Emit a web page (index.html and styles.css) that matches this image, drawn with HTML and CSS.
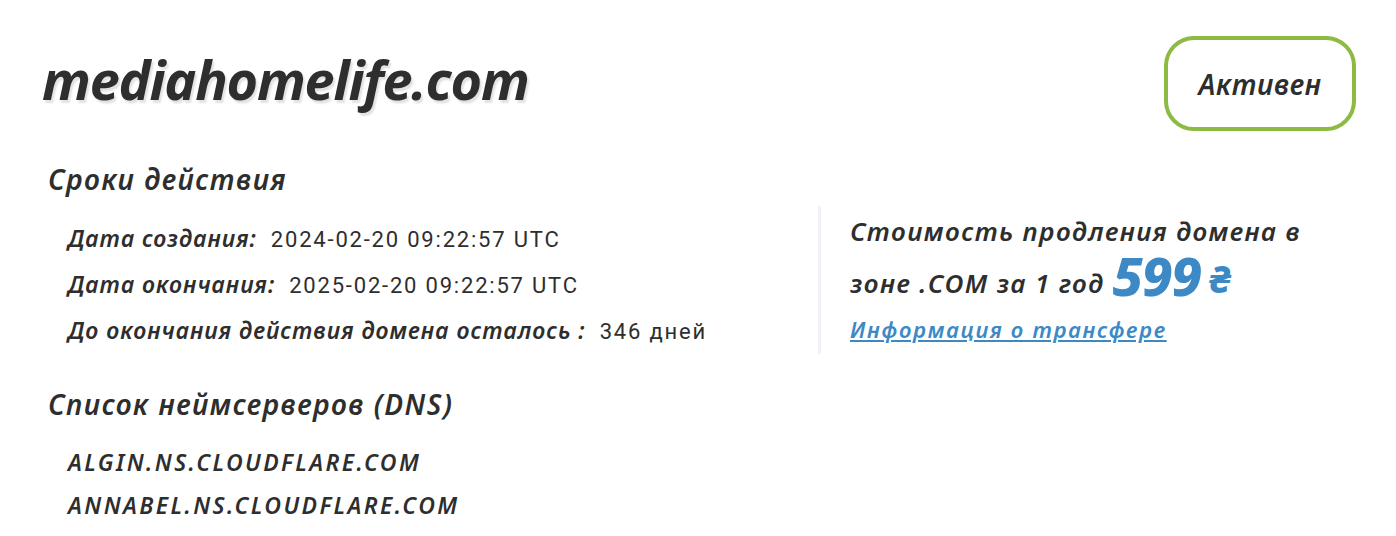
FILE: index.html
```html
<!DOCTYPE html>
<html lang="ru">
<head>
  <meta charset="UTF-8" />
  <title>mediahomelife.com</title>
  <link rel="stylesheet" href="styles.css">
</head>
<body>

  <!-- DOMAIN CARD -->
  <div class="domain-card">
    <div class="card-head">
      <h1 class="domain-name">mediahomelife.com</h1>
      <div class="status-badge">Активен</div>
    </div>

    <div class="card-body">
      <div class="info-col">
        <h2 class="section-title">Сроки действия</h2>
        <div class="info-row"><span class="label">Дата создания:</span> <span class="value">2024-02-20 09:22:57 UTC</span></div>
        <div class="info-row"><span class="label">Дата окончания:</span> <span class="value">2025-02-20 09:22:57 UTC</span></div>
        <div class="info-row"><span class="label">До окончания действия домена осталось :</span> <span class="value">346 дней</span></div>

        <h2 class="section-title dns-title">Список неймсерверов (DNS)</h2>
        <div class="ns-row">ALGIN.NS.CLOUDFLARE.COM</div>
        <div class="ns-row">ANNABEL.NS.CLOUDFLARE.COM</div>
      </div>

      <div class="price-col">
        <p class="price-text">Стоимость продления домена в зоне .COM за 1 год <span class="price">599</span> <span class="currency">₴</span></p>
        <a class="transfer-link" href="#">Информация о трансфере</a>
      </div>
    </div>
  </div>

</body>
</html>
```

FILE: styles.css
```css
body {
  margin: 0;
  background-color: #fff;
  color: #2e2e2e;
  font-family: "Noto Sans", "Open Sans", sans-serif;
}
.domain-card {
  padding: 34px 40px 0 42px;
}
.card-head {
  display: flex;
  justify-content: space-between;
  align-items: flex-start;
}
.domain-name {
  margin: 13px 0 0;
  font-size: 54px;
  font-style: italic;
  font-weight: 700;
  line-height: 64px;
  letter-spacing: -1.2px;
  text-shadow: 2px 3px 2px #e2e2e2;
}
.status-badge {
  margin-top: 2px;
  width: 184px;
  height: 87px;
  border: 4px solid #8cba42;
  border-radius: 30px;
  display: flex;
  align-items: center;
  justify-content: center;
  font-size: 28px;
  font-style: italic;
  font-weight: 600;
  letter-spacing: 0.6px;
}
.card-body {
  display: grid;
  grid-template-columns: 776px 1fr;
}
.section-title {
  margin: 0;
  padding-left: 6px;
  font-size: 28px;
  font-style: italic;
  font-weight: 600;
  line-height: 36px;
  letter-spacing: 1.5px;
}
.info-col {
  padding-top: 30px;
}
.info-row {
  padding-left: 26px;
  margin-top: 6px;
  font-size: 23px;
  line-height: 38px;
}
.section-title + .info-row {
  margin-top: 22px;
}
.label {
  font-style: italic;
  font-weight: 600;
  letter-spacing: 1px;
}
.value {
  margin-left: 8px;
  font-family: "Roboto", sans-serif;
  font-size: 22px;
  letter-spacing: 1.8px;
}
.dns-title {
  margin-top: 35px;
}
.ns-row {
  padding-left: 26px;
  font-size: 23px;
  font-style: italic;
  font-weight: 600;
  line-height: 43px;
  letter-spacing: 2.4px;
}
.dns-title + .ns-row {
  margin-top: 19px;
}
.price-col {
  align-self: start;
  margin-top: 75px;
  padding: 0 0 10px 29px;
  border-left: 3px solid #eef1f5;
}
.price-text {
  margin: 0;
  width: 490px;
  font-size: 26px;
  font-style: italic;
  font-weight: 600;
  line-height: 51px;
  letter-spacing: 1.4px;
}
.price,
.currency {
  color: #3c89c6;
  font-weight: 800;
  line-height: 36px;
}
.price {
  font-size: 54px;
  letter-spacing: -1px;
  vertical-align: -3px;
}
.currency {
  font-size: 38px;
}
.transfer-link {
  display: inline-block;
  margin-top: 5px;
  color: #3c89c6;
  font-size: 22px;
  font-style: italic;
  font-weight: 600;
  letter-spacing: 1.7px;
}
```
